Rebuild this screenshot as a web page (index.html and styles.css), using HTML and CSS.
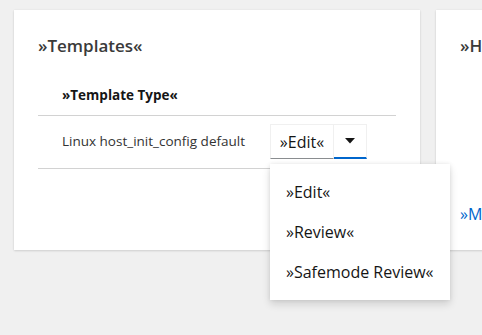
FILE: index.html
```html
<!DOCTYPE html>
<html lang="en">
<head>
  <meta charset="UTF-8">
  <title>Templates</title>
  <link rel="stylesheet" href="styles.css">
</head>
<body>
  <div class="page">
    <section class="card card-main">
      <h2 class="card-title">»Templates«</h2>
      <table class="tpl-table">
        <thead>
          <tr>
            <th class="col-type">»Template Type«</th>
            <th></th>
          </tr>
        </thead>
        <tbody>
          <tr>
            <td>Linux host_init_config default</td>
            <td class="action-cell">
              <div class="split-btn">
                <button class="split-main">»Edit«</button>
                <button class="split-toggle" aria-label="Actions">
                  <svg width="10" height="6" viewBox="0 0 10 6"><path d="M0 0h10L5 5.5z" fill="#151515"/></svg>
                </button>
                <ul class="dropdown-menu">
                  <li><a href="#">»Edit«</a></li>
                  <li><a href="#">»Review«</a></li>
                  <li><a href="#">»Safemode Review«</a></li>
                </ul>
              </div>
            </td>
          </tr>
        </tbody>
      </table>
    </section>

    <section class="card card-side">
      <h2 class="card-title">»Host Details«</h2>
      <div class="card-footer">
        <a href="#" class="card-link">»Manage Hosts«</a>
      </div>
    </section>
  </div>
</body>
</html>
```

FILE: styles.css
```css
:root {
  --text: #151515;
  --text-soft: #333333;
  --border: #d2d2d2;
  --light-border: #f0f0f0;
  --link: #0066cc;
  --page-bg: #f0f0f0;
}

* {
  margin: 0;
  padding: 0;
  box-sizing: border-box;
}

body {
  background: var(--page-bg);
  font-family: 'Open Sans', 'Lato', sans-serif;
  color: var(--text);
  min-height: 335px;
}

.page {
  display: flex;
  gap: 16px;
  padding: 10px 0 0 14px;
  min-height: 335px;
  align-items: flex-start;
  overflow-x: clip;
}

.card {
  background: #fff;
  height: 240px;
  padding: 24px;
  display: flex;
  flex-direction: column;
  box-shadow: 0 1px 2px rgba(3, 3, 3, 0.12), 0 0 2px rgba(3, 3, 3, 0.06);
}

.card-main {
  width: 406px;
  flex-shrink: 0;
}

.card-side {
  width: 320px;
  flex-shrink: 0;
}

.card-title {
  font-size: 17px;
  font-weight: 600;
  line-height: 24px;
  color: #3a3a3a;
}

.card-footer {
  margin-top: auto;
}

.card-link {
  color: var(--link);
  text-decoration: none;
  font-size: 16px;
  line-height: 24px;
}

/* Table */
.tpl-table {
  width: 100%;
  margin-top: 18px;
  border-collapse: collapse;
  font-size: 13.5px;
}

.tpl-table th {
  text-align: left;
  font-weight: 700;
  line-height: 21px;
  padding: 9px 24px;
  border-bottom: 1px solid var(--border);
}

.tpl-table .col-type {
  width: 232px;
}

.tpl-table td {
  line-height: 21px;
  padding: 8px 0 9px 24px;
  border-bottom: 1px solid var(--border);
  color: var(--text-soft);
  vertical-align: middle;
}

.tpl-table .action-cell {
  padding-left: 0;
}

/* Split button */
.split-btn {
  position: relative;
  display: inline-flex;
}

.split-main,
.split-toggle {
  background: #fff;
  font-family: inherit;
  font-size: 16px;
  line-height: 24px;
  color: var(--text);
  border: 1px solid var(--light-border);
  height: 35px;
  cursor: pointer;
}

.split-main {
  width: 64px;
  padding: 4px 0;
  border-bottom-color: #8a8d90;
}

.split-toggle {
  width: 33px;
  border-left: none;
  border-bottom: 2px solid var(--link);
  display: flex;
  align-items: center;
  justify-content: center;
}

.dropdown-menu {
  position: absolute;
  top: calc(100% + 5px);
  left: 0;
  width: 180px;
  list-style: none;
  background: #fff;
  padding: 8px 0;
  box-shadow: 0 4px 8px rgba(3, 3, 3, 0.14), 0 0 4px rgba(3, 3, 3, 0.08);
  z-index: 10;
}

.dropdown-menu a {
  display: block;
  padding: 8px 16px;
  font-size: 16px;
  line-height: 24px;
  color: var(--text);
  text-decoration: none;
  white-space: nowrap;
}
```
